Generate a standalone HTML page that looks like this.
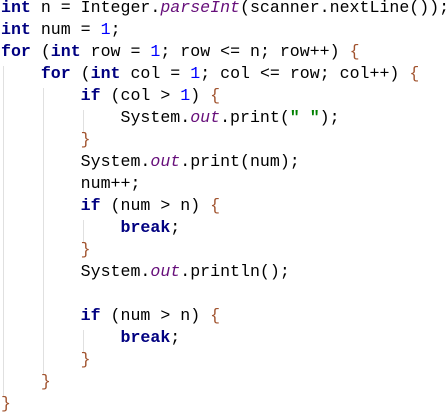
<!DOCTYPE html><html><head><style>
body{margin:0;width:448px;height:411px;background:#fff;overflow:hidden;position:relative;font-family:"Liberation Mono","Courier New",monospace;font-size:16.6px;color:#000}
.l{position:absolute;left:1px;white-space:pre;line-height:22px;height:22px}
.k{color:#000080;font-weight:bold}
.n{color:#0000ff}
.b{color:#a0522d}
.i{color:#660e7a;font-style:italic}
.s{color:#008000;font-weight:bold}
.g{position:absolute;width:1px;background:#e0e0e0}
</style></head><body>
<div class="g" style="left:3px;top:66px;height:330px"></div>
<div class="g" style="left:43px;top:88px;height:286px"></div>
<div class="g" style="left:83px;top:110px;height:22px"></div>
<div class="g" style="left:83px;top:220px;height:22px"></div>
<div class="g" style="left:83px;top:330px;height:22px"></div>
<div class="l" style="top:-3px"><span class="k">int</span> n = Integer.<span class="i">parseInt</span>(scanner.nextLine());</div>
<div class="l" style="top:19px"><span class="k">int</span> num = <span class="n">1</span>;</div>
<div class="l" style="top:41px"><span class="k">for</span> (<span class="k">int</span> row = <span class="n">1</span>; row &lt;= n; row++) <span class="b">{</span></div>
<div class="l" style="top:63px">    <span class="k">for</span> (<span class="k">int</span> col = <span class="n">1</span>; col &lt;= row; col++) <span class="b">{</span></div>
<div class="l" style="top:85px">        <span class="k">if</span> (col &gt; <span class="n">1</span>) <span class="b">{</span></div>
<div class="l" style="top:107px">            System.<span class="i">out</span>.print(<span class="s">" "</span>);</div>
<div class="l" style="top:129px">        <span class="b">}</span></div>
<div class="l" style="top:151px">        System.<span class="i">out</span>.print(num);</div>
<div class="l" style="top:173px">        num++;</div>
<div class="l" style="top:195px">        <span class="k">if</span> (num &gt; n) <span class="b">{</span></div>
<div class="l" style="top:217px">            <span class="k">break</span>;</div>
<div class="l" style="top:239px">        <span class="b">}</span></div>
<div class="l" style="top:261px">        System.<span class="i">out</span>.println();</div>
<div class="l" style="top:283px"></div>
<div class="l" style="top:305px">        <span class="k">if</span> (num &gt; n) <span class="b">{</span></div>
<div class="l" style="top:327px">            <span class="k">break</span>;</div>
<div class="l" style="top:349px">        <span class="b">}</span></div>
<div class="l" style="top:371px">    <span class="b">}</span></div>
<div class="l" style="top:393px"><span class="b">}</span></div>
</body></html>
